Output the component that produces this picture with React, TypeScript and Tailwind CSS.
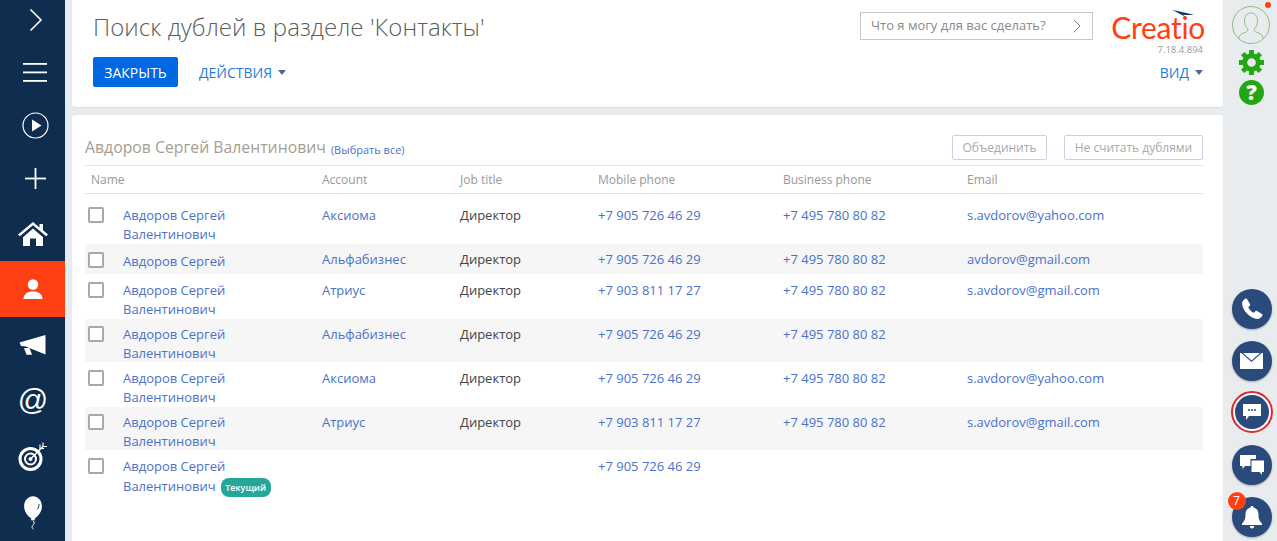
import { ChevronRight } from "lucide-react";

const rows = [
  { first: "Авдоров Сергей", second: "Валентинович", account: "Аксиома", job: "Директор", mobile: "+7 905 726 46 29", business: "+7 495 780 80 82", email: "s.avdorov@yahoo.com", h: "h-[44px]", gray: false },
  { first: "Авдоров Сергей", second: "", account: "Альфабизнес", job: "Директор", mobile: "+7 905 726 46 29", business: "+7 495 780 80 82", email: "avdorov@gmail.com", h: "h-[30px]", gray: true },
  { first: "Авдоров Сергей", second: "Валентинович", account: "Атриус", job: "Директор", mobile: "+7 903 811 17 27", business: "+7 495 780 80 82", email: "s.avdorov@gmail.com", h: "h-[45px]", gray: false, drop: true },
  { first: "Авдоров Сергей", second: "Валентинович", account: "Альфабизнес", job: "Директор", mobile: "+7 905 726 46 29", business: "+7 495 780 80 82", email: "", h: "h-[43px]", gray: true },
  { first: "Авдоров Сергей", second: "Валентинович", account: "Аксиома", job: "Директор", mobile: "+7 905 726 46 29", business: "+7 495 780 80 82", email: "s.avdorov@yahoo.com", h: "h-[45px]", gray: false, drop: true },
  { first: "Авдоров Сергей", second: "Валентинович", account: "Атриус", job: "Директор", mobile: "+7 903 811 17 27", business: "+7 495 780 80 82", email: "s.avdorov@gmail.com", h: "h-[43px]", gray: true },
  { first: "Авдоров Сергей", second: "Валентинович", account: "", job: "", mobile: "+7 905 726 46 29", business: "", email: "", h: "h-[50px]", gray: false, drop: true, current: true },
];

function Sidebar() {
  return (
    <div className="w-[65px] shrink-0 bg-[#0f2d4e] flex flex-col text-white">
      <div className="h-[40px] pl-[7px] flex items-center justify-center">
        <svg width="14" height="24" viewBox="0 0 14 24" fill="none" stroke="white" strokeWidth="1.6"><path d="M1.500 1.500 12 12 1.500 22.500" /></svg>
      </div>
      <div className="h-[65px] pl-[5px] flex items-center justify-center">
        <svg width="24" height="19" viewBox="0 0 24 19" fill="white"><rect width="24" height="1.800" y="0" /><rect width="24" height="1.800" y="8.500" /><rect width="24" height="1.800" y="17" /></svg>
      </div>
      <div className="h-[41px] pl-[5px] flex items-center justify-center">
        <svg width="27" height="27" viewBox="0 0 27 27"><circle cx="13.500" cy="13.500" r="12.500" fill="none" stroke="white" strokeWidth="1.200" /><path d="M10 7.500 19.500 13.500 10 19.500Z" fill="white" /></svg>
      </div>
      <div className="h-[65px] pl-[5px] flex items-center justify-center">
        <svg width="21" height="21" viewBox="0 0 21 21" fill="white"><rect x="9.600" width="1.800" height="21" /><rect y="9.600" width="21" height="1.800" /></svg>
      </div>
      <div className="h-[50px] pb-[4px] flex items-center justify-center">
        <svg width="30" height="24" viewBox="0 0 30 24" fill="white"><path d="M15 0 0 12.500l1.800 1.700L15 3.200l13.200 11 1.800-1.700-5-4.200V2h-3.500v3.400Z" /><path d="M5 15.200 15 6.500l10 8.700V24h-7v-7.500h-6V24H5Z" /></svg>
      </div>
      <div className="h-[56px] bg-[#ff4013] flex items-center justify-center">
        <svg width="20" height="20" viewBox="0 0 20 20" fill="white"><circle cx="10" cy="5.500" r="5.200" /><path d="M0.500 20c0-5 4-7.500 9.500-7.500s9.500 2.500 9.500 7.500Z" /></svg>
      </div>
      <div className="h-[56px] flex items-center justify-center">
        <svg width="27" height="21" viewBox="0 0 27 21" fill="white"><path d="M26.500 0v19.500L6 11.200 2 11 .5 7.500Z" /><path d="M5 13h5.500l2.500 6.800H7.500Z" /></svg>
      </div>
      <div className="h-[56px] flex items-center justify-center">
        <span className="text-[30px] leading-none italic font-['Liberation_Sans',sans-serif] -mt-[3px]">@</span>
      </div>
      <div className="h-[56px] flex items-center justify-center">
        <svg width="30" height="30" viewBox="0 0 30 30" fill="none" stroke="white">
          <circle cx="12.500" cy="17" r="10.500" strokeWidth="3" />
          <circle cx="12.500" cy="17" r="5.500" strokeWidth="2" />
          <circle cx="12.500" cy="17" r="2" fill="white" stroke="none" />
          <path d="M13 16.500 25 4.500" strokeWidth="1.500" />
          <path d="M22 2.500v4h4M25 0.500v4h4" strokeWidth="1.200" />
        </svg>
      </div>
      <div className="flex-1 flex justify-center pt-[11px]">
        <svg width="20" height="35" viewBox="0 0 22 38" fill="white">
          <path d="M11 0c5.500 0 9.800 4.800 9.800 11 0 6.600-5 12-8.200 13.500l.9 2H8.500l.9-2C6.200 23 1.200 17.600 1.200 11 1.200 4.800 5.500 0 11 0Z" />
          <path d="M11 27c1.800 2 1.800 3-.2 5-1.300 1.400-1 3 .6 4.500" fill="none" stroke="white" strokeWidth="1" />
          <path d="M17.500 8.500c.4 2.500-.5 4.500-2 6" fill="none" stroke="#0f2d4e" strokeWidth="1" />
        </svg>
      </div>
    </div>
  );
}

function RightBar() {
  return (
    <div className="w-[54px] shrink-0 flex flex-col items-center pb-[4px] pl-[3px]">
      <div className="relative mt-[6px] -ml-[1px] w-[38px] h-[38px]">
        <svg width="38" height="38" viewBox="0 0 38 38" fill="none" stroke="#8fc07c" strokeWidth="1">
          <circle cx="19" cy="19" r="18.500" />
          <path d="M7 32.500c.5-4 3-5 6-6 2-.8 3-1.500 3-3.500-2-1.500-3.500-4.500-3.500-8 0-5 2.500-8 6.500-8s6.500 3 6.500 8c0 3.500-1.500 6.500-3.500 8 0 2 1 2.700 3 3.500 3 1 5.500 2 6 6" />
        </svg>
        <span className="absolute -top-[4px] right-[-1px] w-[6px] h-[6px] rounded-full bg-[#ff4013]" />
      </div>
      <svg className="mt-[6px]" width="25" height="25" viewBox="0 0 26 26" fill="none" stroke="#22a614">
        <circle cx="13" cy="13" r="7" strokeWidth="5" />
        <path d="M13 0v5M13 21v5M0 13h5M21 13h5M3.800 3.800l3.500 3.500M18.700 18.700l3.500 3.500M22.200 3.800l-3.500 3.500M7.300 18.700l-3.500 3.500" strokeWidth="5" />
      </svg>
      <div className="mt-[5px] w-[25px] h-[25px] rounded-full bg-[#22a614] flex items-center justify-center text-white text-[21px] font-extrabold leading-none">?</div>

      <div className="mt-auto flex flex-col items-center gap-[12px]">
        <Round>
          <svg width="22" height="22" viewBox="0 0 24 24" fill="white"><path d="M6.600 1.200 9.800 6.500c.4.700.2 1.500-.3 2L8 10c.9 2.500 3.500 5.200 6 6l1.500-1.500c.5-.5 1.300-.7 2-.3l5.300 3.200c.7.400.9 1.300.4 2-1.200 1.900-3 3.400-5.200 3.400C10.500 22.800 1.200 13.500 1.200 6c0-2.200 1.500-4 3.400-5.200.7-.5 1.600-.3 2 .4Z" /></svg>
        </Round>
        <Round>
          <svg width="23" height="16" viewBox="0 0 23 16" fill="white"><path d="M0 0h1.200l10.300 9L21.800 0H23v16H0Z" /><path d="M3 0h17l-8.500 7.400Z" /></svg>
        </Round>
        <div className="-mt-[2px] w-[42px] h-[42px] rounded-full border-[2px] border-[#e0262e] bg-white flex items-center justify-center">
          <div className="w-[34px] h-[34px] rounded-full bg-[#2a4a7c] flex items-center justify-center">
            <svg width="18" height="17" viewBox="0 0 18 17"><path d="M0 0h18v12H6l-3 4v-4H0Z" fill="white" /><circle cx="6" cy="6" r="1" fill="#2a4a7c" /><circle cx="9" cy="6" r="1" fill="#2a4a7c" /><circle cx="12" cy="6" r="1" fill="#2a4a7c" /></svg>
          </div>
        </div>
        <Round>
          <svg width="24" height="20" viewBox="0 0 24 20" fill="white"><path d="M0 0h16v4H10.500v7H5l-2.500 3v-3H0Z" /><path d="M11.500 5.500H24V17h-2v3l-2.500-3h-8Z" /></svg>
        </Round>
        <div className="relative">
          <Round>
            <svg width="20" height="23" viewBox="0 0 20 23" fill="white"><path d="M10 0c1 0 1.500.7 1.500 1.500C15 2.500 16.500 5 16.500 8.500c0 4.500 1 6.500 3.500 9v1.500H0v-1.500c2.500-2.500 3.500-4.500 3.500-9C3.500 5 5 2.500 8.500 1.500 8.500.7 9 0 10 0Z" /><path d="M7.800 20h4.400c0 1.500-1 2.500-2.200 2.500S7.800 21.500 7.800 20Z" /></svg>
          </Round>
          <span className="absolute -top-[5px] -left-[4px] w-[18px] h-[18px] rounded-full bg-[#ff4013] text-white text-[12px] flex items-center justify-center">7</span>
        </div>
      </div>
    </div>
  );
}

function Round({ children }: { children: React.ReactNode }) {
  return (
    <div className="w-[40px] h-[40px] rounded-full bg-[#2a4a7c] shadow-[0_1px_2px_rgba(0,0,0,0.3)] flex items-center justify-center">
      {children}
    </div>
  );
}

function Caret() {
  return <span className="inline-block ml-[6px] mb-[3px] border-x-[4.500px] border-x-transparent border-t-[5px] border-t-[#4a6b9c]" />;
}

function Header() {
  return (
    <div className="h-[107px] shrink-0 bg-white rounded-b-[3px] shadow-[0_1px_1px_rgba(0,0,0,0.06)] pl-[21px] pr-[18px] flex flex-col">
      <div className="flex items-start">
        <h1 className="mt-[9px] text-[24px] leading-[36px] font-light text-[#5c5c5c] tracking-[0.06px]">Поиск дублей в разделе 'Контакты'</h1>
        <div className="ml-auto mt-[12px] w-[233px] h-[28px] border border-[#c8c8c8] flex items-center justify-between pl-[10px] pr-[3px] text-[13px] text-[#8a8a8a]">
          <span>Что я могу для вас сделать?</span>
          <ChevronRight size={24} strokeWidth={0.8} className="text-[#666]" />
        </div>
        <div className="ml-[19px] w-[93px] flex flex-col items-end relative">
          <span className="absolute right-[11px] top-[10px]">
            <svg width="22" height="8" viewBox="0 0 22 8"><path d="M0 0C7 1 15 3 22 5L11 5l4 3C10 5 5 2 0 0Z" fill="#1d3a64" /></svg>
          </span>
          <span className="mt-[9px] text-[30px] leading-[36px] font-normal text-[#ff4013] font-['Lato',sans-serif] tracking-[-0.3px]">Creatio</span>
          <span className="mt-[-1px] pr-[2px] text-[9.500px] leading-[12px] text-[#999]">7.18.4.894</span>
        </div>
      </div>
      <div className="mt-[2px] flex items-center h-[30px] relative -top-[1px]">
        <button className="w-[85px] h-[30px] bg-[#0068e0] rounded-[2px] text-white text-[14px] font-medium">ЗАКРЫТЬ</button>
        <span className="ml-[21px] text-[14px] text-[#1f7ae0]">ДЕЙСТВИЯ<Caret /></span>
        <span className="ml-auto pr-[2px] text-[14px] text-[#1f7ae0]">ВИД<Caret /></span>
      </div>
    </div>
  );
}

function Row({ r }: { r: (typeof rows)[number] }) {
  return (
    <div className={`${r.h} ${r.gray ? "bg-[#f6f6f6]" : ""} ${r.drop ? "pt-[1px]" : ""} flex text-[13px] leading-[19px]`}>
      <div className={`w-[38px] shrink-0 pl-[3px] ${r.second ? "pt-[7px]" : "pt-[8px]"}`}>
        <div className="w-[16px] h-[16px] border-[2px] border-[#a8a8a8] rounded-[2px] bg-white" />
      </div>
      <div className={`w-[199px] shrink-0 text-[#4a72c9] ${r.second ? "pt-[6px]" : "pt-[8px]"}`}>
        <div>{r.first}</div>
        {r.second && (
          <div className="flex items-center">
            {r.second}
            {r.current && (
              <span className="ml-[5px] mt-[2px] h-[19px] w-[50px] justify-center rounded-[8px] bg-[#26a69a] text-white text-[9px] font-semibold flex items-center">Текущий</span>
            )}
          </div>
        )}
      </div>
      <div className="w-[138px] shrink-0 pt-[6px] text-[#4a72c9]">{r.account}</div>
      <div className="w-[138px] shrink-0 pt-[6px] text-[#444]">{r.job}</div>
      <div className="w-[185px] shrink-0 pt-[6px] text-[#4a72c9]">{r.mobile}</div>
      <div className="w-[184px] shrink-0 pt-[6px] text-[#4a72c9]">{r.business}</div>
      <div className="pt-[6px] text-[#4a72c9]">{r.email}</div>
    </div>
  );
}

function Duplicates() {
  return (
    <div className="flex-1 mt-[8px] bg-white rounded-t-[3px] pl-[13px] pr-[20px] min-h-0 overflow-hidden">
      <div className="h-[51px] pt-[20px] border-b border-[#e8e5da] flex items-start">
        <span className="text-[15.800px] leading-[25px] text-[#a79e92]">Авдоров Сергей Валентинович</span>
        <span className="ml-[5px] mt-[2px] text-[11px] leading-[25px] text-[#4a72c9]">(Выбрать все)</span>
        <button className="ml-auto w-[95px] h-[25px] border border-[#c9d2e0] rounded-[2px] text-[12px] text-[#aaa]">Объединить</button>
        <button className="ml-[17px] w-[139px] h-[25px] border border-[#c9d2e0] rounded-[2px] text-[12px] text-[#aaa]">Не считать дублями</button>
      </div>
      <div className="h-[28px] border-b border-[#e4e4e4] flex items-center text-[12px] text-[#999]">
        <span className="w-[237px] pl-[6px] shrink-0">Name</span>
        <span className="w-[138px] shrink-0">Account</span>
        <span className="w-[138px] shrink-0">Job title</span>
        <span className="w-[185px] shrink-0">Mobile phone</span>
        <span className="w-[184px] shrink-0">Business phone</span>
        <span>Email</span>
      </div>
      <div className="mt-[6px]">
        {rows.map((r, i) => (
          <Row key={i} r={r} />
        ))}
      </div>
    </div>
  );
}

export default function App() {
  return (
    <div className="h-screen overflow-hidden flex bg-[#e9ecee] font-['Open_Sans',sans-serif]">
      <Sidebar />
      <div className="flex-1 min-w-0 pl-[7px] flex flex-col">
        <Header />
        <Duplicates />
      </div>
      <RightBar />
    </div>
  );
}
